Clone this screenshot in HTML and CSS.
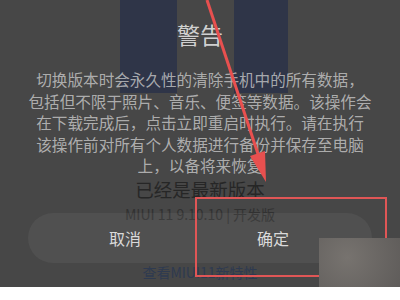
FILE: index.html
```html
<!DOCTYPE html>
<html lang="zh-CN">
<head>
    <meta charset="UTF-8">
    <title>警告</title>
    <link rel="stylesheet" href="styles.css">
</head>
<body>
    <div class="screen">
        <h2 class="title">警告</h2>
        <p class="message">
            切换版本时会永久性的清除手机中的所有数据，<br>
            包括但不限于照片、音乐、便签等数据。该操作会<br>
            在下载完成后，点击立即重启时执行。请在执行<br>
            该操作前对所有个人数据进行备份并保存至电脑<br>
            上，以备将来恢复
        </p>
        <div class="status">已经是最新版本</div>
        <div class="version">MIUI 11 9.10.10 | 开发版</div>
        <div class="actions">
            <div class="btn">取消</div>
            <div class="btn">确定</div>
        </div>
        <div class="link">查看MIUI11新特性</div>

        <!-- annotations on top of the screenshot -->
        <div class="mark-box"></div>
        <div class="patch"></div>
        <svg class="arrow" width="400" height="287" viewBox="0 0 400 287">
            <line x1="207" y1="0" x2="260" y2="160" stroke="#e8504f" stroke-width="3"/>
            <polygon points="266,182 250,156 265,151" fill="#e8504f"/>
        </svg>
    </div>
</body>
</html>
```

FILE: styles.css
```css
body{
    margin: 0;
    background-color: #ffffff;
    font-family: "Noto Sans CJK SC", "Noto Sans", sans-serif;
}

.screen{
    position: relative;
    height: 287px;
    overflow: hidden;
    display: flex;
    flex-direction: column;
    align-items: center;
    padding-top: 19px;
    box-sizing: border-box;
    background:
        linear-gradient(#2f3548, #2f3548) 120px 0 / 57px 93px no-repeat,
        linear-gradient(#2f3548, #2f3548) 234px 0 / 54px 93px no-repeat,
        #474747;
}

.title{
    margin: 0;
    font-size: 23px;
    line-height: 30px;
    font-weight: normal;
    color: rgba(228, 228, 228, 0.9);
}

.message{
    margin: 20px 0 0 0;
    font-size: 15.6px;
    line-height: 21.5px;
    text-align: center;
    color: rgba(212, 212, 212, 0.74);
    white-space: nowrap;
}

.status{
    font-size: 18.5px;
    line-height: 24px;
    color: #262626;
}

.version{
    margin-top: 4px;
    font-size: 14px;
    line-height: 18px;
    color: #313131;
}

.actions{
    margin-top: -10px;
    width: 344px;
    height: 50px;
    box-sizing: border-box;
    padding: 0 25px 0 23px;
    border-radius: 25px;
    background-color: rgba(255, 255, 255, 0.05);
    display: flex;
}

.btn{
    flex: 1;
    display: flex;
    align-items: center;
    justify-content: center;
    font-size: 16px;
    color: #dadada;
}

.link{
    font-size: 14px;
    line-height: 18px;
    color: #2e3a50;
}

.mark-box{
    position: absolute;
    left: 195px;
    top: 197px;
    width: 192px;
    height: 80px;
    box-sizing: border-box;
    border: 2px solid #e05656;
}

.patch{
    position: absolute;
    right: 0;
    bottom: 0;
    width: 81px;
    height: 49px;
    background: radial-gradient(circle at 35% 40%, #77736f, #5f5c5a);
}

.arrow{
    position: absolute;
    left: 0;
    top: 0;
}
```
